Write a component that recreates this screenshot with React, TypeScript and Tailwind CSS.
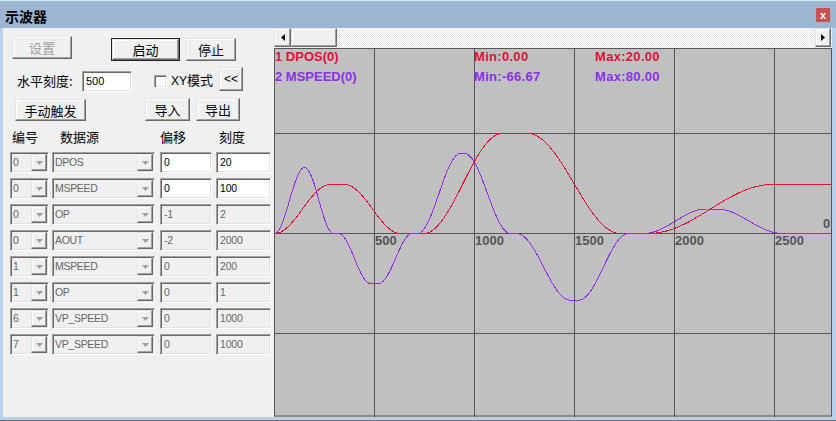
import React from 'react';

const cjk = "font-['Noto_Sans_CJK_SC',sans-serif]";
const lat = "font-['Liberation_Sans','Noto_Sans_CJK_SC',sans-serif]";
const raised =
  'border border-t-[#e3e3e3] border-l-[#e3e3e3] border-b-[#696969] border-r-[#696969] shadow-[inset_-1px_-1px_0_#a0a0a0,inset_1px_1px_0_#ffffff] bg-[#f0f0f0]';
const sunken =
  'border border-t-[#a0a0a0] border-l-[#a0a0a0] border-b-white border-r-white shadow-[inset_1px_1px_0_#696969,inset_-1px_-1px_0_#e3e3e3]';

function Btn({ cls, children, def, disabled }: { cls: string; children: React.ReactNode; def?: boolean; disabled?: boolean }) {
  const inner = (
    <div className={`${raised} w-full h-full flex items-center justify-center ${cjk} text-[13px] leading-none ${disabled ? 'text-[#a0a0a0]' : 'text-black'}`}>
      {children}
    </div>
  );
  if (def) {
    return <div className={`${cls} border border-[#222] shrink-0`}>{inner}</div>;
  }
  return <div className={`${cls} shrink-0`}>{inner}</div>;
}

function Arrow() {
  return (
    <svg width="7" height="4" viewBox="0 0 7 4">
      <polygon points="0,0 7,0 3.5,4" fill="#a0a0a0" />
    </svg>
  );
}

function Combo({ cls, text }: { cls: string; text: string }) {
  return (
    <div className={`${cls} ${sunken} h-[21px] flex items-stretch shrink-0 bg-[#f0f0f0]`}>
      <div className={`flex-1 pl-[2px] flex items-center ${lat} text-[10.5px] tracking-[-0.3px] text-[#666] leading-none`}>{text}</div>
      <div className={`${raised} w-[16px] my-[1px] mr-[1px] flex items-center justify-center`}>
        <Arrow />
      </div>
    </div>
  );
}

function Field({ cls, text, enabled }: { cls: string; text: string; enabled?: boolean }) {
  return (
    <div
      className={`${cls} ${sunken} h-[21px] flex items-center pl-[3px] shrink-0 ${lat} text-[10.5px] tracking-[-0.2px] leading-none ${
        enabled ? 'bg-white text-black' : 'bg-[#f0f0f0] text-[#666]'
      }`}
    >
      {text}
    </div>
  );
}

const rows: [string, string, string, string, boolean][] = [
  ['0', 'DPOS', '0', '20', true],
  ['0', 'MSPEED', '0', '100', true],
  ['0', 'OP', '-1', '2', false],
  ['0', 'AOUT', '-2', '2000', false],
  ['1', 'MSPEED', '0', '200', false],
  ['1', 'OP', '0', '1', false],
  ['6', 'VP_SPEED', '0', '1000', false],
  ['7', 'VP_SPEED', '0', '1000', false],
];

function curve(keys: number[][], X: number) {
  for (let i = 0; i < keys.length - 1; i++) {
    const [x0, v0] = keys[i];
    const [x1, v1] = keys[i + 1];
    if (X >= x0 && X <= x1) {
      const t = x1 === x0 ? 0 : (X - x0) / (x1 - x0);
      const r = 0.5 * (1 - Math.cos(Math.PI * t));
      return v0 + (v1 - v0) * r;
    }
  }
  return keys[keys.length - 1][1];
}

const purpleKeys = [
  [274, 0], [304, 66], [333, 0], [338, 0], [370, -50], [378, -50], [412, 0], [417, 0],
  [460, 80], [464, 80], [510, 0], [516, 0], [570, -66.67], [578, -66.67], [628, 0], [643, 0],
  [706, 24.5], [716, 24.5], [782, 0], [831, 0],
];
const redKeys = [
  [274, 0], [330, 49], [344, 49], [400, 0], [423, 0], [502, 100], [527, 100], [620, 0],
  [648, 0], [772, 49], [831, 49],
];

function pts(keys: number[][]) {
  const out: string[] = [];
  for (let X = 275; X <= 830; X++) {
    const v = curve(keys, X);
    out.push(`${X - 274 + 0.5},${(185.5 - v).toFixed(2)}`);
  }
  return out.join(' ');
}

function ScrollArrow({ dir }: { dir: 'l' | 'r' }) {
  return (
    <svg width="4" height="7" viewBox="0 0 4 7">
      {dir === 'l' ? <polygon points="4,0 4,7 0,3.5" fill="#000" /> : <polygon points="0,0 0,7 4,3.5" fill="#000" />}
    </svg>
  );
}

function Chart() {
  const chartLbl = `${lat} font-bold text-[13px] leading-[16px] absolute whitespace-nowrap`;
  return (
    <div className="relative w-[558px] flex-1 bg-[#c0c0c0]">
      <svg className="absolute inset-0" width="558" height="369" viewBox="0 0 558 369">
        {[100.5, 200.5, 300.5, 400.5, 500.5].map((x) => (
          <line key={x} x1={x} y1={0} x2={x} y2={369} stroke="#575757" strokeWidth={1} />
        ))}
        {[85.5, 185.5, 285.5].map((y) => (
          <line key={y} x1={0} y1={y} x2={558} y2={y} stroke="#575757" strokeWidth={1} />
        ))}
        <rect x={0.5} y={0.5} width={557} height={367.5} fill="none" stroke="#575757" strokeWidth={1} />
        <polyline points={pts(redKeys)} fill="none" stroke="#e0103a" strokeWidth={1} shapeRendering="crispEdges" />
        <polyline points={pts(purpleKeys)} fill="none" stroke="#8e2ee8" strokeWidth={1} shapeRendering="crispEdges" />
      </svg>
      <div className={`${chartLbl} left-[1px] top-[1px] text-[#e0103a]`}>1 DPOS(0)</div>
      <div className={`${chartLbl} left-[1px] top-[21px] text-[#8e2ee8]`}>2 MSPEED(0)</div>
      <div className={`${chartLbl} left-[200px] top-[1px] text-[#e0103a] tracking-[0.3px]`}>Min:0.00</div>
      <div className={`${chartLbl} left-[200px] top-[21px] text-[#8e2ee8] tracking-[0.3px]`}>Min:-66.67</div>
      <div className={`${chartLbl} left-[321px] top-[1px] text-[#e0103a] tracking-[0.3px]`}>Max:20.00</div>
      <div className={`${chartLbl} left-[321px] top-[21px] text-[#8e2ee8] tracking-[0.3px]`}>Max:80.00</div>
      <div className={`${chartLbl} left-[101px] top-[185px] text-[#555]`}>500</div>
      <div className={`${chartLbl} left-[201px] top-[185px] text-[#555]`}>1000</div>
      <div className={`${chartLbl} left-[301px] top-[185px] text-[#555]`}>1500</div>
      <div className={`${chartLbl} left-[401px] top-[185px] text-[#555]`}>2000</div>
      <div className={`${chartLbl} left-[501px] top-[185px] text-[#555]`}>2500</div>
      <div className={`${chartLbl} left-[549px] top-[168px] text-[#555]`}>0</div>
    </div>
  );
}

export default function App() {
  return (
    <div className="w-[836px] h-[421px] flex flex-col bg-[#f0f0f0] overflow-hidden">
      {/* Title bar */}
      <div className="h-[28px] shrink-0 bg-[#9db6d2] border-t border-[#dbe6f2] flex items-center justify-between pl-[5px] pr-[6px]">
        <div className={`${cjk} font-bold text-[14px] leading-none text-black mt-[2px]`}>示波器</div>
        <div className="w-[14px] h-[14px] bg-[#c75050] flex items-center justify-center text-white font-bold text-[11px] leading-none font-['Liberation_Sans',sans-serif] mt-[1px]">
          x
        </div>
      </div>

      {/* Body */}
      <div className="flex h-[389px] shrink-0 border-l-[3px] border-r-[4px] border-[#b9d1ea]">
        {/* Left panel */}
        <div className="w-[271px] shrink-0 flex flex-col">
          {/* Row 1 */}
          <div className="flex items-start mt-[8px] h-[25px]">
            <div className="ml-[9px]">
              <Btn cls="w-[60px] h-[23px]" disabled>
                设置
              </Btn>
            </div>
            <div className="ml-[39px] mt-[2px]">
              <Btn cls="w-[69px] h-[23px]" def>
                启动
              </Btn>
            </div>
            <div className="ml-[6px] mt-[2px]">
              <Btn cls="w-[50px] h-[23px]">停止</Btn>
            </div>
          </div>

          {/* Row 2 */}
          <div className="flex items-start mt-[6px] h-[25px]">
            <div className={`ml-[14px] w-[65px] mt-[6px] ${cjk} text-[13px] leading-[16px] text-black`}>水平刻度:</div>
            <div className={`mt-[4px] w-[50px] h-[21px] ${sunken} bg-white flex items-center pl-[3px] ${lat} text-[11px] leading-none text-black`}>
              500
            </div>
            <div className={`ml-[22px] mt-[8px] w-[13px] h-[13px] ${sunken} bg-white`} />
            <div className={`ml-[4px] w-[48px] mt-[5px] ${cjk} text-[13px] leading-[16px] text-black`}>
              <span className={`${lat} text-[12px]`}>XY</span>模式
            </div>
            <Btn cls="w-[24px] h-[24px]">
              <span className={`${lat} text-[12px]`}>&lt;&lt;</span>
            </Btn>
          </div>

          {/* Row 3 */}
          <div className="flex items-start mt-[6px] h-[23px]">
            <div className="ml-[12px] mt-[1px]">
              <Btn cls="w-[71px] h-[22px]">手动触发</Btn>
            </div>
            <div className="ml-[59px]">
              <Btn cls="w-[45px] h-[23px]">导入</Btn>
            </div>
            <div className="ml-[6px]">
              <Btn cls="w-[44px] h-[23px]">导出</Btn>
            </div>
          </div>

          {/* Header */}
          <div className={`flex items-center h-[30px] ${cjk} text-[13px] leading-none text-black`}>
            <div className="ml-[9px] w-[48px]">编号</div>
            <div className="w-[100px]">数据源</div>
            <div className="w-[59px]">偏移</div>
            <div>刻度</div>
          </div>

          {/* Rows */}
          <div className="flex flex-col gap-[5px] mt-[1px]">
            {rows.map((r, i) => (
              <div key={i} className="flex items-center">
                <Combo cls="ml-[7px] w-[39px]" text={r[0]} />
                <Combo cls="ml-[3px] w-[103px]" text={r[1]} />
                <Field cls="ml-[5px] w-[52px]" text={r[2]} enabled={r[4]} />
                <Field cls="ml-[4px] w-[55px]" text={r[3]} enabled={r[4]} />
              </div>
            ))}
          </div>
        </div>

        {/* Right panel */}
        <div className="w-[558px] shrink-0 flex flex-col">
          <div className="h-[20px] shrink-0 flex bg-[repeating-conic-gradient(#ffffff_0_25%,#e8e8e8_0_50%)] bg-[length:2px_2px]">
            <div className={`${raised} w-[17px] h-[19px] flex items-center justify-center`}>
              <ScrollArrow dir="l" />
            </div>
            <div className={`${raised} w-[46px] h-[19px]`} />
            <div className="flex-1" />
            <div className={`${raised} w-[16px] h-[19px] mr-[1px] flex items-center justify-center`}>
              <ScrollArrow dir="r" />
            </div>
          </div>
          <Chart />
        </div>
      </div>

      {/* bottom border */}
      <div className="h-[3px] shrink-0 bg-[#b9d1ea]" />
      <div className="h-[1px] shrink-0 bg-[#6d6d6d]" />
    </div>
  );
}
